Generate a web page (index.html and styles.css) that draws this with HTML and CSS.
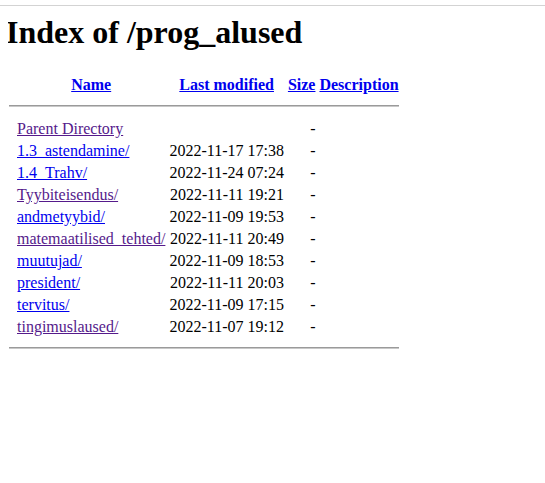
FILE: index.html
```html
<!DOCTYPE html>
<html>
<head>
<meta charset="utf-8">
<title>Index of /prog_alused</title>
<link rel="stylesheet" href="styles.css">
</head>
<body>
<div class="topline"></div>
<h1>Index of /prog_alused</h1>
<table class="listing">
<tr><th class="ico"></th><th><a href="#">Name</a></th><th><a href="#">Last modified</a></th><th><a href="#">Size</a></th><th><a href="#">Description</a></th></tr>
<tr><th colspan="5"><hr class="sep-top"></th></tr>
<tr><td class="ico"></td><td><a class="visited" href="#">Parent Directory</a></td><td>&nbsp;</td><td class="size">  - </td><td>&nbsp;</td></tr>
<tr><td class="ico"></td><td><a href="#">1.3_astendamine/</a></td><td class="date">2022-11-17 17:38  </td><td class="size">  - </td><td>&nbsp;</td></tr>
<tr><td class="ico"></td><td><a href="#">1.4_Trahv/</a></td><td class="date">2022-11-24 07:24  </td><td class="size">  - </td><td>&nbsp;</td></tr>
<tr><td class="ico"></td><td><a class="visited" href="#">Tyybiteisendus/</a></td><td class="date">2022-11-11 19:21  </td><td class="size">  - </td><td>&nbsp;</td></tr>
<tr><td class="ico"></td><td><a href="#">andmetyybid/</a></td><td class="date">2022-11-09 19:53  </td><td class="size">  - </td><td>&nbsp;</td></tr>
<tr><td class="ico"></td><td><a class="visited" href="#">matemaatilised_tehted/</a></td><td class="date">2022-11-11 20:49  </td><td class="size">  - </td><td>&nbsp;</td></tr>
<tr><td class="ico"></td><td><a href="#">muutujad/</a></td><td class="date">2022-11-09 18:53  </td><td class="size">  - </td><td>&nbsp;</td></tr>
<tr><td class="ico"></td><td><a href="#">president/</a></td><td class="date">2022-11-11 20:03  </td><td class="size">  - </td><td>&nbsp;</td></tr>
<tr><td class="ico"></td><td><a href="#">tervitus/</a></td><td class="date">2022-11-09 17:15  </td><td class="size">  - </td><td>&nbsp;</td></tr>
<tr><td class="ico"></td><td><a class="visited" href="#">tingimuslaused/</a></td><td class="date">2022-11-07 19:12  </td><td class="size">  - </td><td>&nbsp;</td></tr>
<tr><th colspan="5"><hr class="sep-bottom"></th></tr>
</table>
</body>
</html>
```

FILE: styles.css
```css
html, body {
  font-family: "Liberation Serif", "Times New Roman", serif;
  font-size: 16px;
  color: #000;
  background: #fff;
}
body {
  margin: 8px;
}
.topline {
  position: absolute;
  left: 0;
  right: 0;
  top: 5px;
  height: 1px;
  background: #d3d3d3;
}
h1 {
  font-size: 32px;
  font-weight: bold;
  margin: 6px 0 22px -2px;
}
a {
  color: #0000ee;
}
a.visited {
  color: #551a8b;
}
.ico {
  width: 2px;
}
.date {
  text-align: right;
}
.size {
  text-align: right;
}
hr {
  border: none;
  border-top: 1px solid #9a9a9a;
  border-bottom: 1px solid #c8c8c8;
  margin: 8px 0 8px -2px;
}
hr.sep-top {
  margin-top: 7px;
  margin-bottom: 9px;
}
hr.sep-bottom {
  margin-top: 7px;
}
```
